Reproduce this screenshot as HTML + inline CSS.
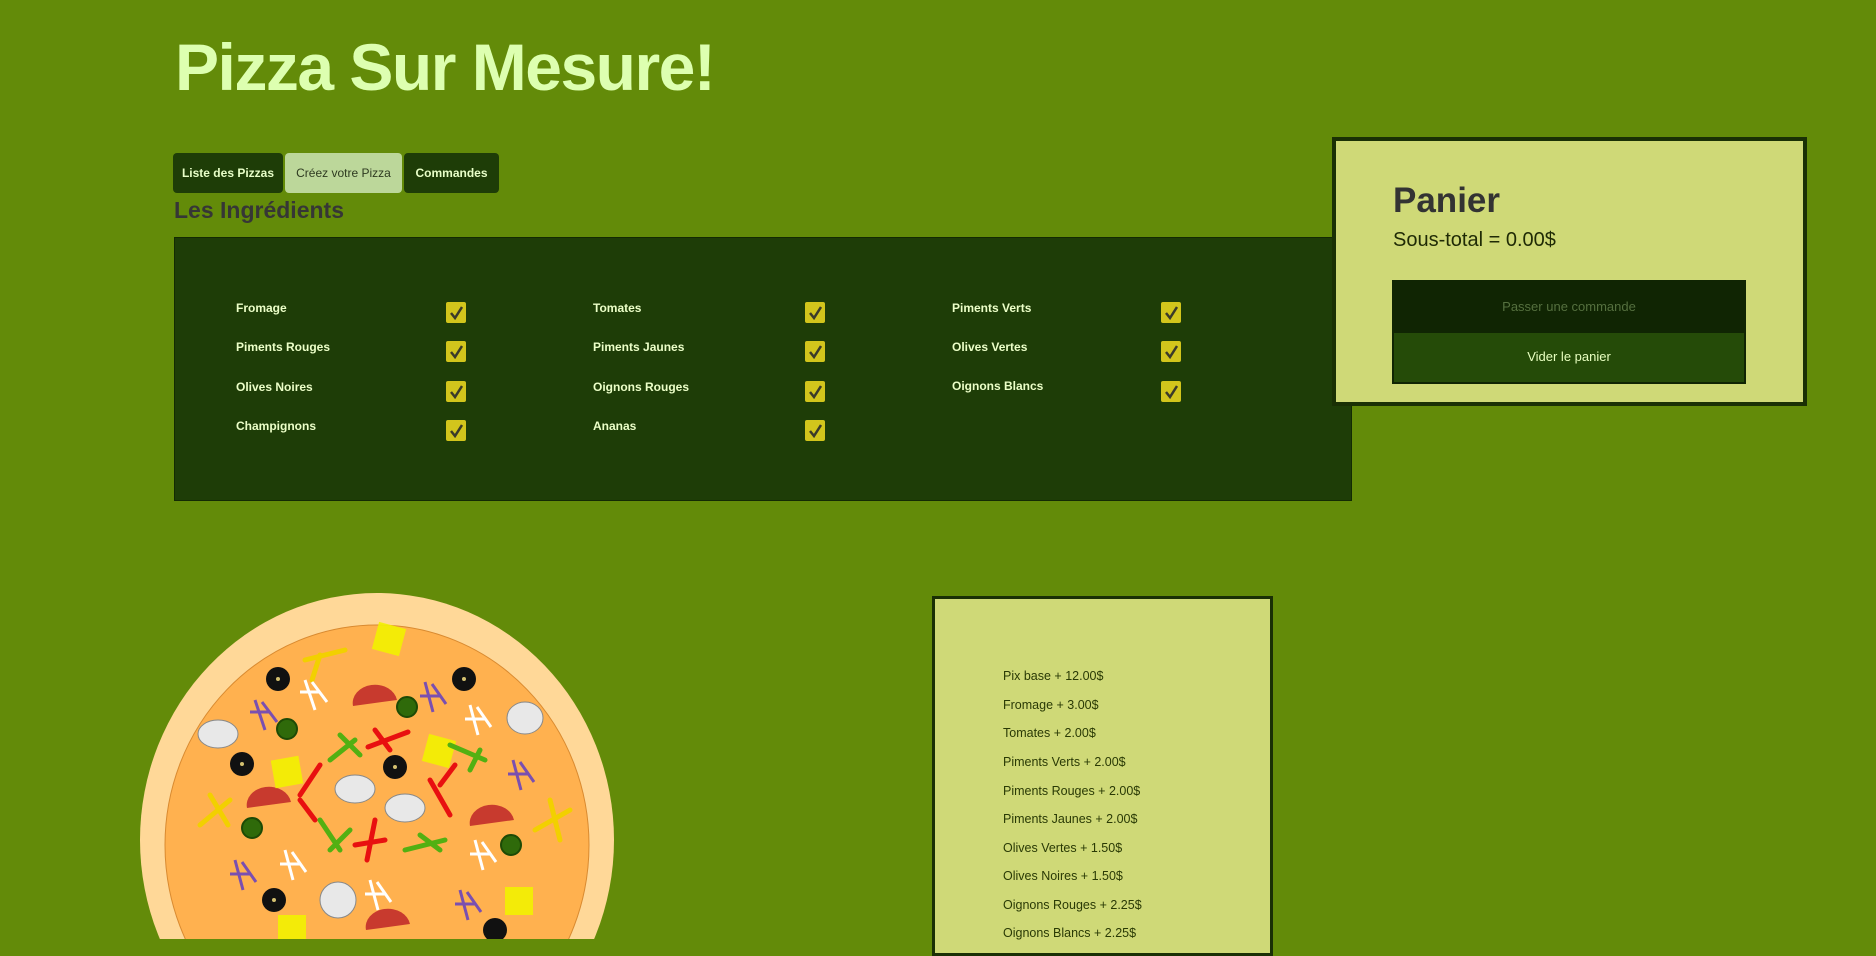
<!DOCTYPE html>
<html><head><meta charset="utf-8"><style>
*{margin:0;padding:0;box-sizing:border-box}
html,body{width:1876px;height:939px;overflow:hidden;background:#638b09;font-family:"Liberation Sans",sans-serif}
.abs{position:absolute}
h1{position:absolute;left:175px;top:27px;font-size:66px;font-weight:bold;color:#ddffb0;letter-spacing:-1.5px;line-height:80px}
.tab{position:absolute;top:153px;height:40px;border-radius:4px;font-size:12px;line-height:40px;text-align:center;color:#e8ffc8;background:#1e3d07;font-weight:bold}
h2{position:absolute;left:174px;top:197px;font-size:23px;color:#363636;font-weight:bold}
.ing{position:absolute;left:174px;top:237px;width:1178px;height:264px;background:#1e3d07;border:1px solid #132a03}
.lbl{position:absolute;font-size:12px;font-weight:bold;color:#ecffc8}
.cb{position:absolute;width:20px;height:21px;background:#d2c51c;border-radius:2px}
.cb svg{position:absolute;left:3px;top:3px}
.panier{position:absolute;left:1332px;top:137px;width:475px;height:269px;background:#cfd977;border:4px solid #1a3005}
.prix{position:absolute;left:932px;top:596px;width:341px;height:360px;background:#cfd977;border:3px solid #1a3005}
.pi{position:absolute;left:68px;font-size:12.5px;color:#2a3a05}
</style></head><body>
<h1>Pizza Sur Mesure!</h1>
<div class="tab" style="left:173px;width:110px">Liste des Pizzas</div>
<div class="tab" style="left:285px;width:117px;background:#bcd79a;color:#2e3a20;font-weight:normal">Créez votre Pizza</div>
<div class="tab" style="left:404px;width:95px">Commandes</div>
<h2>Les Ingrédients</h2>
<div class="ing"></div>
<div class="panier">
 <div class="abs" style="left:57px;top:40px;font-size:35px;font-weight:bold;color:#333">Panier</div>
 <div class="abs" style="left:57px;top:88px;font-size:20px;color:#1f2a05">Sous-total = 0.00$</div>
 <div class="abs" style="left:56px;top:139px;width:354px;height:104px;background:#102503;border:2px solid #102503">
  <div style="height:51px;line-height:50px;text-align:center;font-size:13px;color:#55703f">Passer une commande</div>
  <div style="height:49px;line-height:48px;text-align:center;font-size:13px;color:#e8ffc0;background:#254b08">Vider le panier</div>
 </div>
</div>
<div class="prix">
 <div class="pi" style="top:70px">Pix base + 12.00$</div>
 <div class="pi" style="top:99px">Fromage + 3.00$</div>
 <div class="pi" style="top:127px">Tomates + 2.00$</div>
 <div class="pi" style="top:156px">Piments Verts + 2.00$</div>
 <div class="pi" style="top:185px">Piments Rouges + 2.00$</div>
 <div class="pi" style="top:213px">Piments Jaunes + 2.00$</div>
 <div class="pi" style="top:242px">Olives Vertes + 1.50$</div>
 <div class="pi" style="top:270px">Olives Noires + 1.50$</div>
 <div class="pi" style="top:299px">Oignons Rouges + 2.25$</div>
 <div class="pi" style="top:327px">Oignons Blancs + 2.25$</div>
</div>
<svg class="abs" style="left:0;top:0" width="1876" height="939">
 <ellipse cx="377" cy="840" rx="237" ry="247" fill="#ffd898"/>
 <ellipse cx="377" cy="845" rx="212" ry="220" fill="#ffb14f" stroke="#d98a30" stroke-width="1"/>
 <g fill="#111"><circle cx="278" cy="679" r="12"/><circle cx="464" cy="679" r="12"/><circle cx="242" cy="764" r="12"/><circle cx="395" cy="767" r="12"/><circle cx="274" cy="900" r="12"/><circle cx="495" cy="930" r="12"/></g>
 <g fill="#d4c070"><circle cx="278" cy="679" r="2"/><circle cx="464" cy="679" r="2"/><circle cx="242" cy="764" r="2"/><circle cx="395" cy="767" r="2"/><circle cx="274" cy="900" r="2"/></g>
 <g fill="#2f6a0a" stroke="#1d4a05" stroke-width="2"><circle cx="407" cy="707" r="10"/><circle cx="287" cy="729" r="10"/><circle cx="252" cy="828" r="10"/><circle cx="511" cy="845" r="10"/></g>
 <g fill="#c83a2e"><path d="M353 706a22 18 0 0 1 44 -6z"/><path d="M247 808a22 18 0 0 1 44 -6z"/><path d="M470 826a22 18 0 0 1 44 -6z"/><path d="M366 930a22 18 0 0 1 44 -6z"/></g>
 <g fill="#f2f200" opacity=".9"><rect x="375" y="625" width="28" height="28" transform="rotate(15 389 639)"/><rect x="425" y="737" width="28" height="28" transform="rotate(15 439 751)"/><rect x="273" y="758" width="28" height="28" transform="rotate(-10 287 772)"/><rect x="505" y="887" width="28" height="28"/><rect x="278" y="915" width="28" height="28"/></g>
 <g fill="#e8e8e8" stroke="#888"><ellipse cx="218" cy="734" rx="20" ry="14"/><ellipse cx="355" cy="789" rx="20" ry="14"/><ellipse cx="405" cy="808" rx="20" ry="14"/><ellipse cx="525" cy="718" rx="18" ry="16"/><ellipse cx="338" cy="900" rx="18" ry="18"/></g>
 <g fill="none" stroke-width="5" stroke-linecap="round">
  <path d="M305 660l40 -10M320 655l-8 25" stroke="#f2d000"/>
  <path d="M200 825l30 -25M210 795l18 30" stroke="#f2d000"/>
  <path d="M550 800l10 40M535 830l35 -20" stroke="#f2d000"/>
  <path d="M330 760l25 -20M340 735l20 20" stroke="#52b012"/>
  <path d="M450 745l35 15M480 750l-10 20" stroke="#52b012"/>
  <path d="M320 820l20 30M330 850l20 -20" stroke="#52b012"/>
  <path d="M405 850l40 -10M420 835l20 15" stroke="#52b012"/>
  <path d="M368 747l40 -15M375 730l15 20" stroke="#e81010"/>
  <path d="M300 795l20 -30M300 800l15 20" stroke="#e81010"/>
  <path d="M430 780l20 35M440 785l15 -20" stroke="#e81010"/>
  <path d="M355 845l30 -5M375 820l-8 40" stroke="#e81010"/>
 </g>
 <g fill="none" stroke-width="3" stroke="#7a4fb0"><path d="M255 700l10 30M262 702l15 20M250 712l20 0"/><path d="M425 682l8 30M432 684l14 20M420 696l20 0"/><path d="M513 760l8 30M520 762l14 20M508 774l20 0"/><path d="M235 860l8 30M242 862l14 20M230 874l20 0"/><path d="M460 890l8 30M467 892l14 20M455 904l20 0"/></g>
 <g fill="none" stroke-width="3" stroke="#fff"><path d="M305 680l10 30M312 682l15 20M300 692l20 0"/><path d="M470 705l8 30M477 707l14 20M465 719l20 0"/><path d="M285 850l8 30M292 852l14 20M280 864l20 0"/><path d="M475 840l8 30M482 842l14 20M470 854l20 0"/><path d="M370 880l8 30M377 882l14 20M365 894l20 0"/></g>
</svg>
<div class="lbl" style="left:236px;top:301px">Fromage</div>
<div class="lbl" style="left:236px;top:340px">Piments Rouges</div>
<div class="lbl" style="left:236px;top:380px">Olives Noires</div>
<div class="lbl" style="left:236px;top:419px">Champignons</div>
<div class="lbl" style="left:593px;top:301px">Tomates</div>
<div class="lbl" style="left:593px;top:340px">Piments Jaunes</div>
<div class="lbl" style="left:593px;top:380px">Oignons Rouges</div>
<div class="lbl" style="left:593px;top:419px">Ananas</div>
<div class="lbl" style="left:952px;top:301px">Piments Verts</div>
<div class="lbl" style="left:952px;top:340px">Olives Vertes</div>
<div class="lbl" style="left:952px;top:379px">Oignons Blancs</div>
<div class="cb" style="left:446px;top:302px"><svg width="14" height="15"><path d="M2 8l4 5 7-11" stroke="#3a3a2a" stroke-width="2.5" fill="none"/></svg></div>
<div class="cb" style="left:446px;top:341px"><svg width="14" height="15"><path d="M2 8l4 5 7-11" stroke="#3a3a2a" stroke-width="2.5" fill="none"/></svg></div>
<div class="cb" style="left:446px;top:381px"><svg width="14" height="15"><path d="M2 8l4 5 7-11" stroke="#3a3a2a" stroke-width="2.5" fill="none"/></svg></div>
<div class="cb" style="left:446px;top:420px"><svg width="14" height="15"><path d="M2 8l4 5 7-11" stroke="#3a3a2a" stroke-width="2.5" fill="none"/></svg></div>
<div class="cb" style="left:805px;top:302px"><svg width="14" height="15"><path d="M2 8l4 5 7-11" stroke="#3a3a2a" stroke-width="2.5" fill="none"/></svg></div>
<div class="cb" style="left:805px;top:341px"><svg width="14" height="15"><path d="M2 8l4 5 7-11" stroke="#3a3a2a" stroke-width="2.5" fill="none"/></svg></div>
<div class="cb" style="left:805px;top:381px"><svg width="14" height="15"><path d="M2 8l4 5 7-11" stroke="#3a3a2a" stroke-width="2.5" fill="none"/></svg></div>
<div class="cb" style="left:805px;top:420px"><svg width="14" height="15"><path d="M2 8l4 5 7-11" stroke="#3a3a2a" stroke-width="2.5" fill="none"/></svg></div>
<div class="cb" style="left:1161px;top:302px"><svg width="14" height="15"><path d="M2 8l4 5 7-11" stroke="#3a3a2a" stroke-width="2.5" fill="none"/></svg></div>
<div class="cb" style="left:1161px;top:341px"><svg width="14" height="15"><path d="M2 8l4 5 7-11" stroke="#3a3a2a" stroke-width="2.5" fill="none"/></svg></div>
<div class="cb" style="left:1161px;top:381px"><svg width="14" height="15"><path d="M2 8l4 5 7-11" stroke="#3a3a2a" stroke-width="2.5" fill="none"/></svg></div>
</body></html>
